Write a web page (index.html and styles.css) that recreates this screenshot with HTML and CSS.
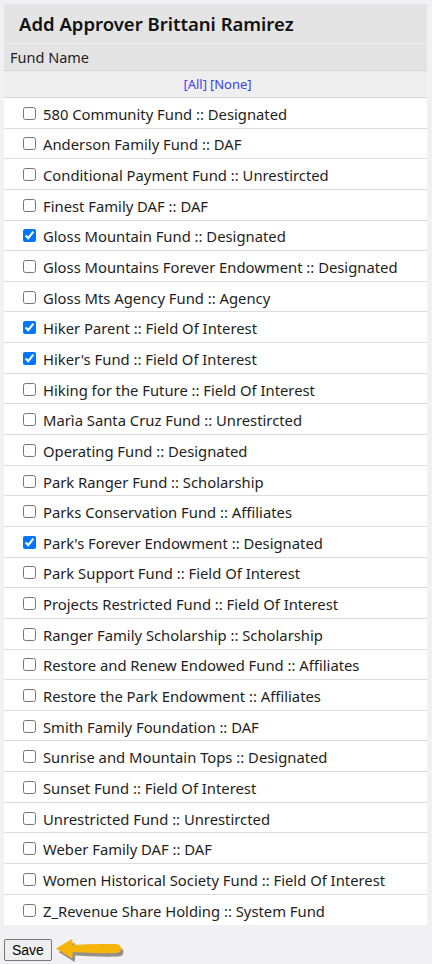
FILE: index.html
```html
<!DOCTYPE html>
<html>
<head>
<meta charset="utf-8">
<link rel="stylesheet" href="styles.css">
</head>
<body>
<div class="panel">
  <div class="title">Add Approver Brittani Ramirez</div>
  <div class="head">Fund Name</div>
  <div class="allnone"><a href="#">[All]</a> <a href="#">[None]</a></div>
  <ul class="list">
    <li><label><input type="checkbox"> 580 Community Fund :: Designated</label></li>
    <li><label><input type="checkbox"> Anderson Family Fund :: DAF</label></li>
    <li><label><input type="checkbox"> Conditional Payment Fund :: Unrestircted</label></li>
    <li><label><input type="checkbox"> Finest Family DAF :: DAF</label></li>
    <li><label><input type="checkbox" checked> Gloss Mountain Fund :: Designated</label></li>
    <li><label><input type="checkbox"> Gloss Mountains Forever Endowment :: Designated</label></li>
    <li><label><input type="checkbox"> Gloss Mts Agency Fund :: Agency</label></li>
    <li><label><input type="checkbox" checked> Hiker Parent :: Field Of Interest</label></li>
    <li><label><input type="checkbox" checked> Hiker's Fund :: Field Of Interest</label></li>
    <li><label><input type="checkbox"> Hiking for the Future :: Field Of Interest</label></li>
    <li><label><input type="checkbox"> Marìa Santa Cruz Fund :: Unrestircted</label></li>
    <li><label><input type="checkbox"> Operating Fund :: Designated</label></li>
    <li><label><input type="checkbox"> Park Ranger Fund :: Scholarship</label></li>
    <li><label><input type="checkbox"> Parks Conservation Fund :: Affiliates</label></li>
    <li><label><input type="checkbox" checked> Park's Forever Endowment :: Designated</label></li>
    <li><label><input type="checkbox"> Park Support Fund :: Field Of Interest</label></li>
    <li><label><input type="checkbox"> Projects Restricted Fund :: Field Of Interest</label></li>
    <li><label><input type="checkbox"> Ranger Family Scholarship :: Scholarship</label></li>
    <li><label><input type="checkbox"> Restore and Renew Endowed Fund :: Affiliates</label></li>
    <li><label><input type="checkbox"> Restore the Park Endowment :: Affiliates</label></li>
    <li><label><input type="checkbox"> Smith Family Foundation :: DAF</label></li>
    <li><label><input type="checkbox"> Sunrise and Mountain Tops :: Designated</label></li>
    <li><label><input type="checkbox"> Sunset Fund :: Field Of Interest</label></li>
    <li><label><input type="checkbox"> Unrestricted Fund :: Unrestircted</label></li>
    <li><label><input type="checkbox"> Weber Family DAF :: DAF</label></li>
    <li><label><input type="checkbox"> Women Historical Society Fund :: Field Of Interest</label></li>
    <li class="last"><label><input type="checkbox"> Z_Revenue Share Holding :: System Fund</label></li>
  </ul>
</div>
<div class="actions">
  <button class="save" type="button">Save</button>
  <svg class="arrow" width="72" height="26" viewBox="0 0 72 26">
    <path d="M3 12 L19 2.5 Q20 6 19.5 8.5 Q40 7 63 7.5 Q68 8 68 12 Q68 16 63 16.5 Q40 17 19.5 15.5 Q20 18.5 19 22 Z" fill="#3a3020" opacity="0.5" transform="translate(1.5,2)"/>
    <path d="M2 10.5 L18 1 Q19 4.5 18.5 7 Q39 5.5 62 6 Q67 6.5 67 10.5 Q67 14.5 62 15 Q39 15.5 18.5 14 Q19 17 18 20.5 Z" fill="#f7b50c"/>
  </svg>
</div>
</body>
</html>
```

FILE: styles.css
```css
html, body {
  margin: 0;
  padding: 0;
}
body {
  background: #f0f0f5;
  font-family: "Noto Sans", "Open Sans", sans-serif;
  color: #1e1e1e;
  padding: 4px 5px 0 4px;
}
.panel {
  background: #fff;
  width: 423px;
}
.title {
  background: #e4e4e4;
  height: 40px;
  box-sizing: border-box;
  padding-left: 15px;
  display: flex;
  align-items: center;
  font-size: 18.5px;
  font-weight: 600;
  color: #111;
  border-bottom: 1px solid #ececec;
}
.head {
  background: #e4e4e4;
  height: 27px;
  box-sizing: border-box;
  padding-left: 6px;
  display: flex;
  align-items: center;
  font-size: 14.5px;
  border-bottom: 1px solid #d4d4d4;
}
.allnone {
  background: #efefef;
  height: 27px;
  box-sizing: border-box;
  display: flex;
  align-items: center;
  justify-content: center;
  gap: 3px;
  font-size: 13px;
  padding-left: 4px;
  border-bottom: 1px solid #d4d4d4;
}
.allnone a {
  color: #4040f2;
  text-decoration: none;
}
.list {
  list-style: none;
  margin: 0;
  padding: 0;
}
.list li {
  height: 30.65px;
  box-sizing: border-box;
  border-bottom: 1px solid #dcdcdc;
  display: flex;
  align-items: center;
  padding-left: 15px;
  padding-top: 2px;
  font-size: 14.8px;
}
.list li.last {
  border-bottom: none;
}
.list label {
  display: flex;
  align-items: center;
}
.list input {
  margin: -1px 7px 0 4px;
  width: 13px;
  height: 13px;
}
.actions {
  display: flex;
  align-items: center;
  gap: 2px;
  padding-top: 11px;
}
.save {
  font-family: "Liberation Sans", Arial, sans-serif;
  font-size: 14px;
  height: 22px;
  padding: 0 7px;
  background: #efefef;
  border: 1px solid #767676;
  border-radius: 2px;
  color: #000;
}
.arrow {
  display: block;
  margin-top: 2px;
}
```
